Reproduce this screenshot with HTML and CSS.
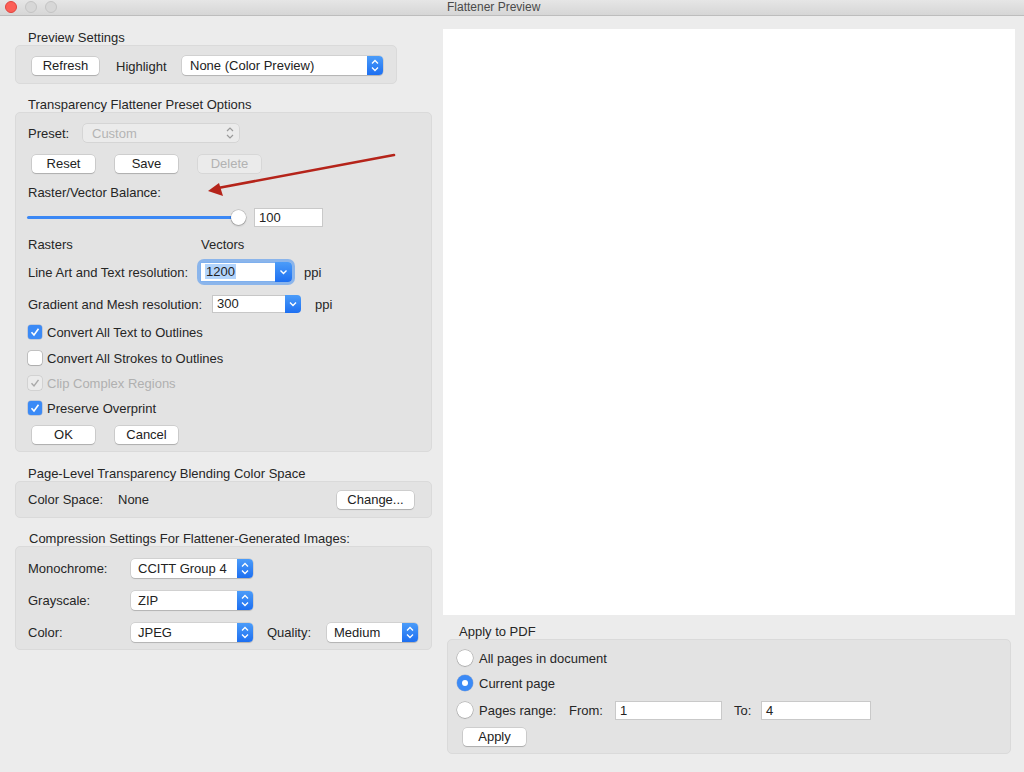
FILE: index.html
```html
<!DOCTYPE html>
<html>
<head>
<meta charset="utf-8">
<title>Flattener Preview</title>
<link rel="stylesheet" href="styles.css">
</head>
<body>
<div class="window">
  <div class="titlebar">
    <span class="light red"></span>
    <span class="light gray"></span>
    <span class="light gray"></span>
    <span class="title">Flattener Preview</span>
  </div>
  <div class="content">
    <div class="left">
      <div class="group-title">Preview Settings</div>
      <div class="box box-preview">
        <button class="btn btn-refresh">Refresh</button>
        <span class="lbl-highlight">Highlight</span>
        <div class="popup popup-highlight">
          <span class="popup-text">None (Color Preview)</span>
          <span class="stepper"><svg width="16" height="19" viewBox="0 0 16 19"><path d="M5 7.5 L8 4.5 L11 7.5 M5 11.5 L8 14.5 L11 11.5" fill="none" stroke="#fff" stroke-width="1.3"/></svg></span>
        </div>
      </div>

      <div class="group-title gt-gap">Transparency Flattener Preset Options</div>
      <div class="box box-preset">
        <div class="row r-preset">
          <span class="lbl-preset">Preset:</span>
          <div class="popup-disabled">
            <span>Custom</span>
            <svg width="12" height="16" viewBox="0 0 12 16"><path d="M3 6 L6 3 L9 6 M3 10 L6 13 L9 10" fill="none" stroke="#9a9a9a" stroke-width="1.2"/></svg>
          </div>
        </div>
        <div class="row r-buttons">
          <button class="btn">Reset</button>
          <button class="btn">Save</button>
          <button class="btn disabled">Delete</button>
        </div>
        <div class="row r-label">Raster/Vector Balance:</div>
        <div class="row r-slider">
          <div class="slider"><span class="track"></span><span class="thumb"></span></div>
          <div class="field field-100">100</div>
        </div>
        <div class="row r-rv"><span class="lbl-rasters">Rasters</span><span>Vectors</span></div>
        <div class="row r-lineart">
          <span class="lbl-lineart">Line Art and Text resolution:</span>
          <div class="combo combo-focus">
            <span class="combo-text"><span class="sel">1200</span></span>
            <span class="combo-btn"><svg width="17" height="20" viewBox="0 0 17 20"><path d="M5.5 8.5 L8.5 11.5 L11.5 8.5" fill="none" stroke="#fff" stroke-width="1.4"/></svg></span>
          </div>
          <span class="ppi">ppi</span>
        </div>
        <div class="row r-gradient">
          <span class="lbl-gradient">Gradient and Mesh resolution:</span>
          <div class="combo combo-300">
            <span class="combo-text">300</span>
            <span class="combo-btn"><svg width="16" height="18" viewBox="0 0 16 18"><path d="M5 7.5 L8 10.5 L11 7.5" fill="none" stroke="#fff" stroke-width="1.4"/></svg></span>
          </div>
          <span class="ppi ppi2">ppi</span>
        </div>
        <div class="row r-check c1">
          <span class="check on"><svg width="14" height="14" viewBox="0 0 14 14"><path d="M3.5 7.3 L6 10 L10.5 3.8" fill="none" stroke="#fff" stroke-width="1.6"/></svg></span>
          <span>Convert All Text to Outlines</span>
        </div>
        <div class="row r-check c2">
          <span class="check off"></span>
          <span>Convert All Strokes to Outlines</span>
        </div>
        <div class="row r-check c3 dim">
          <span class="check dis"><svg width="14" height="14" viewBox="0 0 14 14"><path d="M3.5 7.3 L6 10 L10.5 3.8" fill="none" stroke="#a8a8a8" stroke-width="1.4"/></svg></span>
          <span>Clip Complex Regions</span>
        </div>
        <div class="row r-check c4">
          <span class="check on"><svg width="14" height="14" viewBox="0 0 14 14"><path d="M3.5 7.3 L6 10 L10.5 3.8" fill="none" stroke="#fff" stroke-width="1.6"/></svg></span>
          <span>Preserve Overprint</span>
        </div>
        <div class="row r-ok">
          <button class="btn">OK</button>
          <button class="btn">Cancel</button>
        </div>
      </div>

      <div class="group-title gt-gap2">Page-Level Transparency Blending Color Space</div>
      <div class="box box-color">
        <span class="lbl-cs">Color Space:</span>
        <span>None</span>
        <button class="btn btn-change">Change...</button>
      </div>

      <div class="group-title gt-gap3">Compression Settings For Flattener-Generated Images:</div>
      <div class="box box-comp">
        <div class="row r-comp">
          <span class="lbl-comp">Monochrome:</span>
          <div class="popup popup-comp">
            <span class="popup-text">CCITT Group 4</span>
            <span class="stepper"><svg width="16" height="19" viewBox="0 0 16 19"><path d="M5 7.5 L8 4.5 L11 7.5 M5 11.5 L8 14.5 L11 11.5" fill="none" stroke="#fff" stroke-width="1.3"/></svg></span>
          </div>
        </div>
        <div class="row r-comp">
          <span class="lbl-comp">Grayscale:</span>
          <div class="popup popup-comp">
            <span class="popup-text">ZIP</span>
            <span class="stepper"><svg width="16" height="19" viewBox="0 0 16 19"><path d="M5 7.5 L8 4.5 L11 7.5 M5 11.5 L8 14.5 L11 11.5" fill="none" stroke="#fff" stroke-width="1.3"/></svg></span>
          </div>
        </div>
        <div class="row r-comp">
          <span class="lbl-comp">Color:</span>
          <div class="popup popup-comp">
            <span class="popup-text">JPEG</span>
            <span class="stepper"><svg width="16" height="19" viewBox="0 0 16 19"><path d="M5 7.5 L8 4.5 L11 7.5 M5 11.5 L8 14.5 L11 11.5" fill="none" stroke="#fff" stroke-width="1.3"/></svg></span>
          </div>
          <span class="lbl-quality">Quality:</span>
          <div class="popup popup-quality">
            <span class="popup-text">Medium</span>
            <span class="stepper"><svg width="16" height="19" viewBox="0 0 16 19"><path d="M5 7.5 L8 4.5 L11 7.5 M5 11.5 L8 14.5 L11 11.5" fill="none" stroke="#fff" stroke-width="1.3"/></svg></span>
          </div>
        </div>
      </div>
    </div>

    <div class="right">
      <div class="preview"></div>
      <div class="group-title gt-apply">Apply to PDF</div>
      <div class="box box-apply">
        <div class="row r-radio ra1">
          <span class="radio"></span><span>All pages in document</span>
        </div>
        <div class="row r-radio ra2">
          <span class="radio on"><span class="dot"></span></span><span>Current page</span>
        </div>
        <div class="row r-radio ra3">
          <span class="radio"></span><span class="lbl-range">Pages range:</span>
          <span class="lbl-from">From:</span>
          <div class="field field-from">1</div>
          <span class="lbl-to">To:</span>
          <div class="field field-to">4</div>
        </div>
        <div class="row r-apply">
          <button class="btn">Apply</button>
        </div>
      </div>
    </div>
  </div>

  <svg class="arrow" width="1024" height="772" viewBox="0 0 1024 772">
    <line x1="394" y1="155" x2="218" y2="188" stroke="#b5241a" stroke-width="2.6" stroke-linecap="round"/>
    <path d="M208 191 L219 183 L223 196 Z" fill="#b5241a"/>
  </svg>
</div>
</body>
</html>
```

FILE: styles.css
```css
* { box-sizing: border-box; }

html, body {
  margin: 0;
  padding: 0;
}

body {
  background: #ececec;
  font-family: "Liberation Sans", Arial, sans-serif;
  font-size: 13px;
  color: #262626;
  width: 1024px;
  height: 772px;
  overflow: hidden;
}

.window {
  position: relative;
  width: 1024px;
  height: 772px;
}

/* Title bar */
.titlebar {
  height: 16px;
  background: linear-gradient(#e6e6e6, #d6d6d6);
  border-bottom: 1px solid #bdbdbd;
  display: flex;
  align-items: center;
  padding-left: 5px;
}

.light {
  width: 12px;
  height: 12px;
  border-radius: 50%;
  margin-right: 8px;
  margin-top: -1px;
}

.light.red {
  background: #fc5f57;
  border: 0.5px solid #e0443e;
}

.light.gray {
  background: #d7d7d7;
  border: 0.5px solid #c4c4c4;
}

.title {
  margin-left: 382px;
  font-size: 12px;
  color: #4a4a4a;
  line-height: 15px;
}

/* Layout */
.content {
  display: flex;
  padding: 13px 0 0 15px;
  gap: 11px;
}

.left {
  width: 417px;
  display: flex;
  flex-direction: column;
}

.right {
  width: 572px;
  display: flex;
  flex-direction: column;
}

.group-title {
  height: 16px;
  padding-top: 2px;
  line-height: 14px;
  padding-left: 13px;
  color: #262626;
}

.gt-gap { margin-top: 12px; }
.gt-gap2 { margin-top: 13px; }
.gt-gap3 { margin-top: 12px; padding-left: 14px; }

.box {
  background: #e3e3e3;
  border: 1px solid #dadada;
  border-radius: 5px;
}

.row {
  display: flex;
  align-items: center;
}

/* Buttons */
.btn {
  font-family: inherit;
  font-size: 13px;
  color: #222;
  background: #fff;
  border: none;
  border-radius: 4px;
  height: 18px;
  width: 63px;
  padding: 0;
  line-height: 18px;
  box-shadow: 0 0 0 0.5px rgba(0,0,0,0.18), 0 1px 1px rgba(0,0,0,0.16);
}

.btn.disabled {
  background: #ebebeb;
  color: #b2b2b2;
  box-shadow: 0 0 0 0.5px rgba(0,0,0,0.1);
}

/* Preview Settings */
.box-preview {
  width: 382px;
  height: 39px;
  display: flex;
  align-items: center;
  padding-left: 16px;
  padding-top: 2px;
}

.btn-refresh { width: 67px; }

.lbl-highlight {
  margin-left: 17px;
  width: 66px;
  padding-top: 2px;
}

.popup {
  display: flex;
  height: 19px;
  background: #fff;
  border-radius: 4px;
  box-shadow: 0 0 0 0.5px rgba(0,0,0,0.16), 0 1px 1px rgba(0,0,0,0.14);
}

.popup-text {
  flex: 1;
  line-height: 19px;
  padding-left: 8px;
  color: #222;
}

.stepper {
  width: 16px;
  height: 19px;
  background: linear-gradient(#4b9cf9, #1d6ff1);
  border-radius: 0 4px 4px 0;
  display: flex;
}

.popup-highlight { width: 201px; }

/* Preset box */
.box-preset {
  height: 340px;
  padding: 11px 12px 0 12px;
}

.r-preset { height: 18px; }

.lbl-preset { width: 55px; }

.popup-disabled {
  width: 156px;
  height: 18px;
  background: #ebebeb;
  border-radius: 4px;
  box-shadow: 0 0 0 0.5px rgba(0,0,0,0.12);
  display: flex;
  align-items: center;
  justify-content: space-between;
  padding: 0 3px 0 9px;
  color: #b4b4b4;
}

.r-buttons {
  height: 18px;
  margin-top: 13px;
  padding-left: 4px;
  gap: 20px;
}

.r-label {
  height: 16px;
  margin-top: 11px;
}

.r-slider {
  height: 20px;
  margin-top: 7px;
  margin-left: -1px;
}

.slider {
  width: 219px;
  height: 20px;
  display: flex;
  align-items: center;
}

.track {
  width: 207px;
  height: 3px;
  background: #3b88f5;
  border-radius: 2px;
}

.thumb {
  width: 15px;
  height: 15px;
  border-radius: 50%;
  background: #fff;
  margin-left: -2px;
  box-shadow: 0 0 0 0.5px rgba(0,0,0,0.22), 0 1px 2px rgba(0,0,0,0.22);
}

.field {
  background: #fff;
  border: 1px solid #c9c9c9;
  height: 19px;
  line-height: 17px;
  padding-left: 4px;
  color: #222;
}

.field-100 {
  width: 69px;
  margin-left: 8px;
}

.r-rv {
  height: 16px;
  margin-top: 9px;
}

.lbl-rasters { width: 173px; }

.r-lineart {
  height: 22px;
  margin-top: 9px;
}

.lbl-lineart { width: 172px; }

.combo {
  display: flex;
  height: 20px;
}

.combo-text {
  flex: 1;
  background: #fff;
  border: 1px solid #c7c7c7;
  border-right: none;
  line-height: 18px;
  padding-left: 4px;
  color: #222;
}

.combo-btn {
  width: 17px;
  background: linear-gradient(#4b9cf9, #1d6ff1);
  border-radius: 0 4px 4px 0;
  display: flex;
}

.combo-focus {
  width: 92px;
  border-radius: 4px;
  box-shadow: 0 0 0 3px rgba(80, 150, 240, 0.6);
}

.combo-focus .combo-text {
  border-color: #7fb0ee;
}

.sel {
  background: #b2d4fc;
  padding: 0 1px;
}

.ppi { margin-left: 12px; }
.ppi2 { margin-left: 14px; }

.r-gradient {
  height: 20px;
  margin-top: 11px;
}

.lbl-gradient { width: 184px; }

.combo-300 {
  width: 89px;
  height: 18px;
}

.combo-300 .combo-text {
  line-height: 16px;
}

.combo-300 .combo-btn {
  width: 16px;
}

.r-check {
  height: 20px;
}

.c1 { margin-top: 8px; }
.c2 { margin-top: 6px; }
.c3 { margin-top: 5px; }
.c4 { margin-top: 5px; }

.check {
  width: 14px;
  height: 14px;
  border-radius: 3px;
  margin-right: 5px;
  display: flex;
}

.check.on {
  background: #3b8af6;
  box-shadow: 0 0 0 0.5px rgba(0,60,160,0.3);
}

.check.off {
  background: #fff;
  box-shadow: 0 0 0 0.5px rgba(0,0,0,0.3), 0 1px 1px rgba(0,0,0,0.1);
}

.check.dis {
  background: #ebebeb;
  box-shadow: 0 0 0 0.5px rgba(0,0,0,0.15);
}

.dim { color: #b0b0b0; }

.r-ok {
  height: 18px;
  margin-top: 8px;
  padding-left: 4px;
  gap: 20px;
}

/* Color space */
.box-color {
  height: 37px;
  display: flex;
  align-items: center;
  padding: 0 17px 0 12px;
}

.lbl-cs { width: 90px; }

.btn-change {
  width: 77px;
  margin-left: auto;
}

/* Compression */
.box-comp {
  height: 104px;
  padding: 11px 12px 0 12px;
}

.r-comp {
  height: 20px;
  margin-bottom: 12px;
}

.lbl-comp { width: 103px; }

.popup-comp { width: 122px; }
.popup-comp .popup-text { padding-left: 7px; }

.lbl-quality {
  margin-left: 14px;
  width: 60px;
}

.popup-quality { width: 91px; }
.popup-quality .popup-text { padding-left: 7px; }

/* Right column */
.preview {
  height: 586px;
  background: #fff;
}

.gt-apply {
  margin-top: 8px;
  padding-left: 16px;
}

.box-apply {
  width: 564px;
  height: 115px;
  margin-left: 4px;
  padding: 8px 9px 0 9px;
}

.r-radio { height: 20px; }
.ra2 { margin-top: 5px; }
.ra3 { margin-top: 7px; }

.radio {
  width: 16px;
  height: 16px;
  border-radius: 50%;
  background: #fff;
  box-shadow: 0 0 0 0.5px rgba(0,0,0,0.3), 0 1px 1px rgba(0,0,0,0.12);
  margin-right: 6px;
  display: flex;
  align-items: center;
  justify-content: center;
}

.radio.on {
  background: #3b8af6;
  box-shadow: 0 0 0 0.5px rgba(0,60,160,0.3);
}

.dot {
  width: 6px;
  height: 6px;
  border-radius: 50%;
  background: #fff;
}

.lbl-range { width: 90px; }
.lbl-from { width: 46px; }

.field-from { width: 107px; }

.lbl-to {
  margin-left: 12px;
  width: 27px;
}

.field-to { width: 110px; }

.r-apply {
  height: 18px;
  margin-top: 8px;
  padding-left: 6px;
}

/* Annotation arrow overlay */
.arrow {
  position: absolute;
  left: 0;
  top: 0;
  pointer-events: none;
}
```
